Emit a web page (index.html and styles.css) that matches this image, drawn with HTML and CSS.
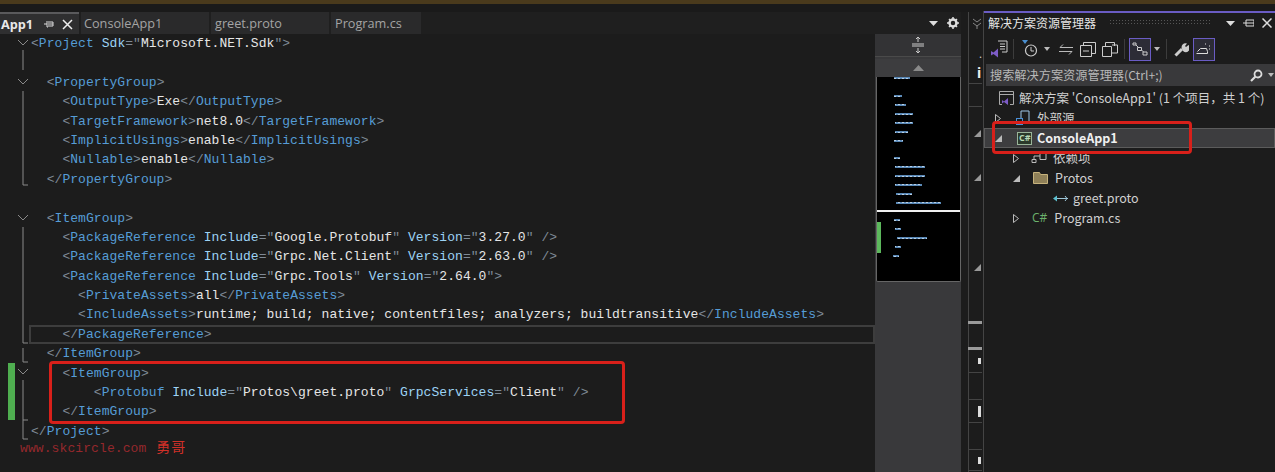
FILE: index.html
```html
<!DOCTYPE html>
<html lang="zh">
<head>
<meta charset="utf-8">
<title>ConsoleApp1</title>
<link rel="stylesheet" href="styles.css">
</head>
<body>
<div class="topbar"></div>
<div class="app">
  <section class="doc">
    <div class="tabstrip">
      <div class="tab active"><span class="tab-name">App1</span>
        <svg class="pin" width="10" height="10" viewBox="0 0 10 10"><path d="M0 5h3M3 2v6h1M4 3h5v4H4M4 5h5" fill="none" stroke="#ddd"/></svg>
        <svg class="close" width="11" height="11" viewBox="0 0 11 11"><path d="M1 1l9 9M10 1l-9 9" stroke="#eee" stroke-width="1.5"/></svg>
      </div>
      <div class="tab w128">ConsoleApp1</div>
      <div class="tab w118">greet.proto</div>
      <div class="tab w90">Program.cs</div>
      <div class="tab-tools">
        <svg width="9" height="6" viewBox="0 0 9 6"><path d="M0 1h9L4.500 6z" fill="#ddd"/></svg>
        <svg width="12" height="12" viewBox="0 0 12 12"><circle cx="6" cy="6" r="3.500" fill="none" stroke="#ddd" stroke-width="2.500"/><path d="M6 0v2M6 10v2M0 6h2M10 6h2M2 2l1.500 1.500M10 2L8.500 3.500M2 10l1.500-1.500M10 10L8.500 8.500" stroke="#ddd" stroke-width="1.500"/></svg>
      </div>
    </div>
    <div class="editor-row">
      <div class="editor">
        <svg class="gutter" width="30" height="438" viewBox="0 34 30 438">
          <g class="guide">
            <path d="M23 50v20M23 91v94h5M23 227v116h5M23 348v14h5M23 380v40h5M23 420v19h5"/>
            <path d="M18 40l5 5 5-5M18 79l5 5 5-5M18 215l5 5 5-5M18 369l5 5 5-5"/>
          </g>
          <rect class="changed" x="8" y="363" width="7" height="57"/>
        </svg>
        <div class="code">
          <div class="line"><span class="b">&lt;</span><span class="t">Project</span> <span class="a">Sdk</span><span class="b">="</span><span class="v">Microsoft.NET.Sdk</span><span class="b">"&gt;</span></div>
          <div class="line"></div>
          <div class="line">  <span class="b">&lt;</span><span class="t">PropertyGroup</span><span class="b">&gt;</span></div>
          <div class="line">    <span class="b">&lt;</span><span class="t">OutputType</span><span class="b">&gt;</span><span class="v">Exe</span><span class="b">&lt;/</span><span class="t">OutputType</span><span class="b">&gt;</span></div>
          <div class="line">    <span class="b">&lt;</span><span class="t">TargetFramework</span><span class="b">&gt;</span><span class="v">net8.0</span><span class="b">&lt;/</span><span class="t">TargetFramework</span><span class="b">&gt;</span></div>
          <div class="line">    <span class="b">&lt;</span><span class="t">ImplicitUsings</span><span class="b">&gt;</span><span class="v">enable</span><span class="b">&lt;/</span><span class="t">ImplicitUsings</span><span class="b">&gt;</span></div>
          <div class="line">    <span class="b">&lt;</span><span class="t">Nullable</span><span class="b">&gt;</span><span class="v">enable</span><span class="b">&lt;/</span><span class="t">Nullable</span><span class="b">&gt;</span></div>
          <div class="line">  <span class="b">&lt;/</span><span class="t">PropertyGroup</span><span class="b">&gt;</span></div>
          <div class="line"></div>
          <div class="line">  <span class="b">&lt;</span><span class="t">ItemGroup</span><span class="b">&gt;</span></div>
          <div class="line">    <span class="b">&lt;</span><span class="t">PackageReference</span> <span class="a">Include</span><span class="b">="</span><span class="v">Google.Protobuf</span><span class="b">"</span> <span class="a">Version</span><span class="b">="</span><span class="v">3.27.0</span><span class="b">" /&gt;</span></div>
          <div class="line">    <span class="b">&lt;</span><span class="t">PackageReference</span> <span class="a">Include</span><span class="b">="</span><span class="v">Grpc.Net.Client</span><span class="b">"</span> <span class="a">Version</span><span class="b">="</span><span class="v">2.63.0</span><span class="b">" /&gt;</span></div>
          <div class="line">    <span class="b">&lt;</span><span class="t">PackageReference</span> <span class="a">Include</span><span class="b">="</span><span class="v">Grpc.Tools</span><span class="b">"</span> <span class="a">Version</span><span class="b">="</span><span class="v">2.64.0</span><span class="b">"&gt;</span></div>
          <div class="line">      <span class="b">&lt;</span><span class="t">PrivateAssets</span><span class="b">&gt;</span><span class="v">all</span><span class="b">&lt;/</span><span class="t">PrivateAssets</span><span class="b">&gt;</span></div>
          <div class="line">      <span class="b">&lt;</span><span class="t">IncludeAssets</span><span class="b">&gt;</span><span class="v">runtime; build; native; contentfiles; analyzers; buildtransitive</span><span class="b">&lt;/</span><span class="t">IncludeAssets</span><span class="b">&gt;</span></div>
          <div class="line current">    <span class="b">&lt;/</span><span class="t">PackageReference</span><span class="b">&gt;</span></div>
          <div class="line">  <span class="b">&lt;/</span><span class="t">ItemGroup</span><span class="b">&gt;</span></div>
          <div class="line">    <span class="b">&lt;</span><span class="t">ItemGroup</span><span class="b">&gt;</span></div>
          <div class="line">        <span class="b">&lt;</span><span class="t">Protobuf</span> <span class="a">Include</span><span class="b">="</span><span class="v">Protos\greet.proto</span><span class="b">"</span> <span class="a">GrpcServices</span><span class="b">="</span><span class="v">Client</span><span class="b">" /&gt;</span></div>
          <div class="line">    <span class="b">&lt;/</span><span class="t">ItemGroup</span><span class="b">&gt;</span></div>
          <div class="line"><span class="b">&lt;/</span><span class="t">Project</span><span class="b">&gt;</span></div>
        </div>
        <div class="red-box code-box"></div>
        <div class="watermark">www.skcircle.com <span class="wm-cjk">勇哥</span></div>
      </div>
      <div class="mapcol">
        <div class="split-btn">
          <svg width="12" height="16" viewBox="0 0 12 16"><path d="M0 7h12M0 9h12M6 0v5M6 11v5M4 2l2-2 2 2M4 14l2 2 2-2" fill="none" stroke="#ccc"/></svg>
        </div>
        <div class="scroll-up"><svg width="11" height="6" viewBox="0 0 11 6"><path d="M0 6L5.500 0 11 6z" fill="#8a8a8a"/></svg></div>
        <div class="minimap">
          <svg width="83" height="204" viewBox="876 77 83 204">
            <defs>
              <pattern id="mm" width="4" height="2" patternUnits="userSpaceOnUse">
                <rect width="4" height="2" fill="#5b8ab8"/>
                <rect x="1" width="2" height="1" fill="#b9cfe4"/>
              </pattern>
            </defs>
            <g fill="url(#mm)">
              <rect x="893" y="77" width="16" height="2"/>
              <rect x="893" y="95" width="8" height="2"/>
              <rect x="894" y="104" width="11" height="2"/>
              <rect x="894" y="113" width="18" height="2"/>
              <rect x="894" y="122" width="18" height="2"/>
              <rect x="894" y="131" width="13" height="2"/>
              <rect x="893" y="140" width="9" height="2"/>
              <rect x="893" y="157" width="6" height="2"/>
              <rect x="894" y="166" width="30" height="2"/>
              <rect x="894" y="175" width="30" height="2"/>
              <rect x="894" y="184" width="27" height="2"/>
              <rect x="895" y="193" width="16" height="2"/>
              <rect x="895" y="202" width="45" height="2"/>
              <rect x="893" y="219" width="6" height="2"/>
              <rect x="894" y="228" width="6" height="2"/>
              <rect x="896" y="237" width="30" height="2"/>
              <rect x="894" y="246" width="6" height="2"/>
              <rect x="892" y="255" width="6" height="2"/>
            </g>
            <rect x="876" y="222" width="4" height="31" fill="#5cb85c"/>
            <rect x="875" y="210" width="85" height="2" fill="#f0f0f0"/>
          </svg>
        </div>
      </div>
      <div class="map-gap"></div>
    </div>
  </section>

  <aside class="rail">
    <svg class="rail-top" width="11" height="12" viewBox="0 0 11 12"><path d="M1 1l4 3 4-3M1 5l4 3 4-3M5 8v3" fill="none" stroke="#888"/></svg>
    <span class="rail-dot">.</span>
    <span class="rail-i">i</span>
    <span class="rail-sep s1"></span>
    <span class="rail-sep s2"></span>
    <span class="rail-tri t1"></span>
    <span class="rail-tri t2"></span>
    <span class="rail-tri t3"></span>
    <span class="rail-sel"></span>
    <span class="rail-mark m1"></span>
    <span class="rail-sep s3"></span>
    <span class="rail-sep s4"></span>
    <span class="rail-mark m2"></span>
    <span class="rail-sep s5"></span>
    <span class="rail-sep s6"></span>
    <span class="rail-mark m3"></span>
    <span class="rail-sep s7"></span>
  </aside>

  <aside class="panel">
    <div class="panel-head">
      <span class="panel-title">解决方案资源管理器</span>
      <span class="grip"></span>
      <svg class="h-caret" width="9" height="6" viewBox="0 0 9 6"><path d="M0 1h9L4.500 6z" fill="#ddd"/></svg>
      <svg width="11" height="10" viewBox="0 0 11 10"><path d="M0 5h3M3 2v6M3 2h8v6H3M3 5h8" fill="none" stroke="#ddd"/></svg>
      <svg width="10" height="10" viewBox="0 0 10 10"><path d="M.5.5l9 9M9.500.5l-9 9" stroke="#ddd" stroke-width="1.500"/></svg>
    </div>
    <div class="toolbar">
      <svg class="ic i-view" width="20" height="18" viewBox="0 0 20 18"><path d="M8 1h9v11h-5M10 4h5M10 6.500h5M10 9h5" fill="none" stroke="#ccc"/><path d="M1 11l2.500 1.500L8 8.500v9l-4.500-3.500L1 15.500z" fill="#7d5cc6"/></svg>
      <span class="tsep sep-a"></span>
      <svg class="ic i-clock" width="18" height="18" viewBox="0 0 18 18"><path d="M1 0h6L4 4z" fill="#4a8fd0"/><circle cx="10" cy="10.500" r="5.500" fill="none" stroke="#ccc" stroke-width="1.200"/><path d="M10 7v4h3" fill="none" stroke="#ccc"/></svg>
      <svg class="caret c-a" width="6" height="4" viewBox="0 0 6 4"><path d="M0 0h6L3 4z" fill="#bbb"/></svg>
      <svg class="ic i-swap" width="14" height="11" viewBox="0 0 14 11"><path d="M1 3.500h13M1 3.500l3-3M0 7.500h13M13 7.500l-3 3" fill="none" stroke="#bbb"/></svg>
      <svg class="ic i-col" width="16" height="15" viewBox="0 0 16 15"><path d="M.5 3.500h11v11H.5zM3.500 3V.5h12v11H12M3 9h6" fill="none" stroke="#ccc"/></svg>
      <svg class="ic i-col" width="16" height="15" viewBox="0 0 16 15"><path d="M.5 4.500h9v10h-9zM3.500 4V.5h9V4M10 3h5.500v8H10" fill="none" stroke="#ccc"/></svg>
      <span class="tsep sep-b"></span>
      <span class="toggled tg1"><svg width="16" height="14" viewBox="0 0 16 14"><path d="M1 1h3v2H1zM5.500 5.500h4v3h-4zM11 10h4v3h-4zM4 3l2 2M9.500 8l2 2" fill="none" stroke="#ccc"/></svg></span>
      <svg class="caret c-b" width="6" height="4" viewBox="0 0 6 4"><path d="M0 0h6L3 4z" fill="#bbb"/></svg>
      <span class="tsep sep-c"></span>
      <svg class="ic i-wrench" width="15" height="15" viewBox="0 0 15 15"><path d="M1.500 13.500L8 7" stroke="#ccc" stroke-width="3"/><path d="M8 7a4 4 0 0 1 5-5.500L11 4l1 1 2.500-2A4 4 0 0 1 9 9" fill="#ccc"/></svg>
      <span class="toggled tg2"><svg width="16" height="12" viewBox="0 0 16 12"><path d="M.5 10.500h11v-2l-1-3h-6l-3 3M13 3h1M13 6h1M9 1h1" fill="none" stroke="#ddd"/></svg></span>
    </div>
    <div class="search">
      <span class="search-text">搜索解决方案资源管理器(Ctrl+;)</span>
      <svg width="13" height="13" viewBox="0 0 13 13"><circle cx="8" cy="5" r="3.500" fill="none" stroke="#ddd" stroke-width="1.800"/><path d="M5.500 7.500L1 12" stroke="#ddd" stroke-width="2.200"/></svg>
      <svg width="6" height="4" viewBox="0 0 6 4"><path d="M0 0h6L3 4z" fill="#bbb"/></svg>
    </div>
    <div class="tree">
      <div class="row lv0">
        <svg class="ti sol" width="15" height="14" viewBox="0 0 15 14"><path d="M11 13.500h3.500V.5H.5v13H3M.5 3.500h14" fill="none" stroke="#aaa"/><path d="M3 9l2 1.500 4-3.500v7l-4-3-2 1.500z" fill="#7d5cc6"/></svg>
        <span>解决方案 'ConsoleApp1' (1 个项目，共 1 个)</span>
      </div>
      <div class="row lv1">
        <svg class="exp" width="6" height="9" viewBox="0 0 6 9"><path d="M.5.500l5 4-5 4z" fill="none" stroke="#bbb"/></svg>
        <svg class="ti src" width="16" height="16" viewBox="0 0 16 16"><path d="M5 8V1h8v10" fill="none" stroke="#9ec6e8"/><rect x=".5" y="8.500" width="6" height="6" fill="none" stroke="#4a90d9"/></svg>
        <span>外部源</span>
      </div>
      <div class="row lv1 selected">
        <svg class="exp" width="7" height="7" viewBox="0 0 7 7"><path d="M7 0v7H0z" fill="#bbb"/></svg>
        <svg class="ti src" width="15" height="13" viewBox="0 0 15 13"><rect x=".5" y=".5" width="14" height="12" fill="#2b3a2b" stroke="#9ab59a"/></svg>
        <span class="csharp-in">C#</span>
        <span class="bold">ConsoleApp1</span>
      </div>
      <div class="row lv2">
        <svg class="exp" width="6" height="9" viewBox="0 0 6 9"><path d="M.5.500l5 4-5 4z" fill="none" stroke="#bbb"/></svg>
        <svg class="ti dep" width="16" height="10" viewBox="0 0 16 10"><path d="M9 .5h6v6H9zM1 6.500h4v3H1zM5 3h4M3 6V3h2" fill="none" stroke="#bbb"/></svg>
        <span>依赖项</span>
      </div>
      <div class="row lv2">
        <svg class="exp" width="7" height="7" viewBox="0 0 7 7"><path d="M7 0v7H0z" fill="#bbb"/></svg>
        <svg class="ti fold" width="15" height="12" viewBox="0 0 15 12"><path d="M.5 11.500V.5h6l1 2h7v9z" fill="#8f8058" stroke="#c6b27c"/></svg>
        <span>Protos</span>
      </div>
      <div class="row lv3">
        <svg class="ti file" width="15" height="7" viewBox="0 0 15 7"><path d="M4 3.500h11" stroke="#9ec6d8"/><path d="M0 3.500L4 .5v6z" fill="#5cc0d0"/><path d="M12 1l2 2.500-2 2.500" fill="none" stroke="#9ec6d8"/></svg>
        <span>greet.proto</span>
      </div>
      <div class="row lv2">
        <svg class="exp" width="6" height="9" viewBox="0 0 6 9"><path d="M.5.500l5 4-5 4z" fill="none" stroke="#bbb"/></svg>
        <span class="csharp">C#</span>
        <span>Program.cs</span>
      </div>
    </div>
    <div class="red-box tree-box"></div>
  </aside>
</div>
</body>
</html>
```

FILE: styles.css
```css
* { box-sizing: border-box; }
html, body { margin: 0; height: 100%; }
body {
  width: 1275px;
  height: 472px;
  overflow: hidden;
  background: #1c1c1c;
  font-family: "Noto Sans CJK SC", "Noto Sans", sans-serif;
  color: #dcdcdc;
}
.topbar {
  height: 12px;
  background: linear-gradient(#4a3a1c 0 4px, #1a1a1a 4px);
}
.app { display: flex; height: 460px; position: relative; }

/* document well */
.doc { width: 961px; display: flex; flex-direction: column; flex: none; }
.tabstrip { height: 22px; display: flex; gap: 2px; background: #1f1f1f; flex: none; }
.tab {
  display: flex;
  align-items: center;
  padding-left: 3px;
  background: #2a2a2b;
  font: 12.700px "Open Sans", "Noto Sans", sans-serif;
  color: #a4a4a4;
  white-space: nowrap;
}
.tab.active {
  width: 79px;
  padding-left: 1px;
  background: #2f2f30;
  border-top: 2px solid #5a5a5c;
  color: #e8e8e8;
  font-weight: 700;
}
.w128 { width: 128px; }
.w118 { width: 118px; padding-left: 4px; }
.w90 { width: 90px; padding-left: 4px; }
.tab-name { width: 43px; flex: none; }
.pin { margin-right: 8px; }
.tab-tools {
  margin-left: auto;
  display: flex;
  align-items: center;
  gap: 9px;
  padding-right: 2px;
}
.editor-row { flex: 1; display: flex; min-height: 0; }
.editor { position: relative; width: 875px; flex: none; display: flex; background: #1c1c1c; overflow: hidden; }
.gutter { flex: none; margin-right: 1px; display: block; }
.guide { fill: none; stroke: #8a8a8a; stroke-width: 1; }
.changed { fill: #4fae50; }
.code {
  flex: 1;
  font: 13px/19.4px "Liberation Mono", monospace;
  letter-spacing: .05px;
}
.line { height: 19.4px; white-space: pre; }
.line.current { margin: 0 0 0 -2px; padding-left: 2px; box-shadow: inset 0 0 0 2px #3d3d3d; }
.b { color: #7f8a96; }
.t { color: #569cd6; }
.a { color: #9cd3f5; }
.v { color: #e6e6e6; }
.red-box {
  position: absolute;
  border: 3px solid #d8201a;
  border-radius: 4px;
  pointer-events: none;
}
.code-box { left: 49px; top: 327px; width: 576px; height: 63px; }
.watermark {
  position: absolute;
  left: 20px;
  top: 403px;
  font: 13px/19px "Liberation Mono", monospace;
  letter-spacing: .1px;
  color: #96282c;
  white-space: pre;
}
.wm-cjk { font: 14px/19px "Noto Sans CJK SC", sans-serif; color: #d03028; letter-spacing: 1px; margin-left: 2px; }

/* minimap */
.mapcol { width: 86px; flex: none; display: flex; flex-direction: column; background: #39393b; }
.split-btn { height: 23px; background: #333335; display: flex; align-items: center; justify-content: center; border-bottom: 1px solid #4a4a4a; flex: none; }
.scroll-up { height: 18px; margin-top: 2px; background: #3d3d3f; display: flex; align-items: center; justify-content: center; flex: none; }
.minimap { width: 85px; height: 205px; margin-left: 1px; background: #000; border: 1px solid #666; border-top: 0; border-radius: 0 0 2px 2px; flex: none; overflow: hidden; }
.minimap svg { display: block; }
.map-gap { flex: 1; }

/* rail */
.rail {
  position: relative;
  width: 23px;
  flex: none;
  border-left: 1px solid transparent;
  background: linear-gradient(90deg, #1c1c1c 6px, #444 6px, #444 7px, #1c1c1c 7px);
}
.rail-top { position: absolute; left: 10px; top: 6px; }
.rail-dot { position: absolute; left: 17px; top: 34px; font-size: 11px; line-height: 14px; color: #ccc; }
.rail-i { position: absolute; left: 15px; top: 52px; font: 700 14px/18px "Noto Sans", sans-serif; color: #eee; }
.rail-sep { position: absolute; left: 6px; width: 14px; height: 1px; background: #444; }
.s1 { top: 71px; } .s2 { top: 94px; } .s3 { top: 360px; } .s4 { top: 387px; } .s5 { top: 410px; } .s6 { top: 437px; } .s7 { top: 458px; }
.rail-tri { position: absolute; left: 12px; width: 0; height: 0; border-left: 7px solid transparent; border-bottom: 7px solid #999; }
.t1 { top: 118px; } .t2 { top: 162px; } .t3 { top: 252px; }
.rail-sel { position: absolute; left: 6px; top: 309px; width: 14px; height: 29px; border: 2px solid #9a9a9a; border-width: 3px 0; }
.rail-mark { position: absolute; left: 16px; width: 3px; background: #ddd; }
.m1 { top: 346px; height: 6px; }
.m2 { top: 394px; height: 11px; }
.m3 { top: 445px; height: 7px; }

/* solution explorer */
.panel { position: relative; flex: 1; min-width: 0; border-left: 1px solid #444; margin-left: -1px; display: flex; flex-direction: column; margin-top: -1px; }
.panel-head {
  height: 23px;
  flex: none;
  border-top: 2px solid #6a5cc4;
  display: flex;
  align-items: center;
  gap: 8px;
  padding: 0 3px 2px 4px;
  font-size: 12px;
}
.panel-title { color: #e6e6e6; width: 113px; flex: none; white-space: nowrap; }
.grip {
  flex: 1;
  height: 7px;
  background-image: radial-gradient(#555 .8px, transparent .9px);
  background-size: 3px 3px;
  margin-right: 7px;
}
.toolbar { height: 30px; flex: none; display: flex; align-items: center; padding-left: 6px; }
.ic, .caret { flex: none; }
.tsep { width: 1px; height: 20px; background: #3c3c3c; flex: none; }
.sep-a { margin: 0 7px 0 3px; }
.i-clock { margin-right: 5px; }
.c-a { margin-right: 9px; }
.i-swap { margin-right: 7px; }
.i-col { margin-right: 6px; }
.sep-b { margin: 0 4px 0 0; }
.c-b { margin: 0 6px 0 3px; }
.sep-c { margin-right: 7px; }
.i-wrench { margin-right: 4px; }
.toggled { width: 22px; height: 23px; border: 1px solid #6a5cc4; background: #2c2c36; display: flex; align-items: center; justify-content: center; flex: none; }
.search {
  height: 22px;
  flex: none;
  margin-left: 2px;
  background: #39393b;
  display: flex;
  align-items: center;
  gap: 5px;
  padding: 0 1px 0 4px;
}
.search-text { flex: 1; font-size: 12.200px; color: #b8b8b8; white-space: nowrap; }
.search svg { flex: none; }
.tree { font: 12.500px/20px "Noto Sans CJK SC", "Open Sans", sans-serif; padding-top: 2px; color: #d0d0d0; }
.row { height: 20px; display: flex; align-items: center; white-space: nowrap; position: relative; }
.row .exp { flex: none; margin-right: 7px; }
.lv0 { padding-left: 15px; }
.lv1 { padding-left: 11px; }
.lv2 { padding-left: 29px; }
.lv3 { padding-left: 69px; }
.ti { flex: none; margin-right: 5px; }
.lv1 .exp { margin-right: 15px; }
.selected { background: #3d3d3f; box-shadow: inset 0 0 0 1px #5c5c5c; }
.csharp-in { position: absolute; left: 35px; font: 700 9px/20px "Open Sans", sans-serif; color: #b7d8b7; }
.bold { font-weight: 700; color: #f0f0f0; }
.lv2 .exp { margin-right: 13px; }
.lv2 .dep { margin-right: 6px; margin-left: -1px; }
.lv2 .fold { margin-right: 7px; }
.csharp { font: 400 12px/20px "Open Sans", sans-serif; color: #6cb26c; margin-right: 7px; }
.tree-box { left: 8px; top: 110px; width: 200px; height: 33px; }
```
